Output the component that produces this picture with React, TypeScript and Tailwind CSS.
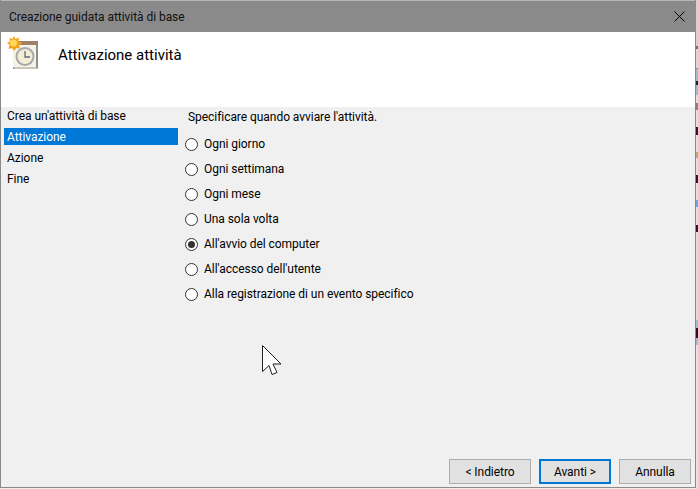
const options = [
  { label: "Ogni giorno" },
  { label: "Ogni settimana" },
  { label: "Ogni mese" },
  { label: "Una sola volta" },
  { label: "All'avvio del computer", checked: true },
  { label: "All'accesso dell'utente" },
  { label: "Alla registrazione di un evento specifico" },
];

const steps = ["Crea un'attività di base", "Attivazione", "Azione", "Fine"];

const strip = [
  "h-[46px] bg-[#d2d2d2]",
  "h-[3px] bg-[#707070]",
  "h-[19px] bg-[#d8d8d8]",
  "h-[1px] bg-[#8c8c8c]",
  "h-[12px] bg-[#a4b8cf]",
  "h-[4px] bg-[#14203c]",
  "h-[10px] bg-[#a4b8cf]",
  "h-[8px] bg-[#e0e0e0]",
  "h-[7px] bg-[#8d7f86]",
  "h-[17px] bg-[#e0e0e0]",
  "h-[8px] bg-[#3a1030]",
  "h-[17px] bg-[#e0e0e0]",
  "h-[6px] bg-[#b8b070]",
  "h-[17px] bg-[#e0e0e0]",
  "h-[8px] bg-[#3a1030]",
  "h-[17px] bg-[#e0e0e0]",
  "h-[7px] bg-[#6aa8dc]",
  "h-[18px] bg-[#e0e0e0]",
  "h-[7px] bg-[#3a1030]",
  "h-[88px] bg-[#dcdcdc]",
  "h-[8px] bg-[#a4b8cf]",
  "h-[10px] bg-[#301028]",
  "h-[7px] bg-[#a4b8cf]",
  "flex-1 bg-[#e4e4e4]",
];

function TaskIcon() {
  return (
    <svg width="32" height="34" viewBox="0 0 32 34" className="block">
      <rect x="6" y="5" width="25" height="28" fill="#8f8f8f" />
      <rect x="6" y="9" width="23" height="22" fill="#f6f2e6" />
      <rect x="8" y="5" width="23" height="4" fill="#a27f68" />
      <path d="M6 31h23l2 2H8z" fill="#c9c5ba" />
      <circle cx="18" cy="20.500" r="9.500" fill="#a8a8a8" />
      <circle cx="18" cy="20.500" r="7.500" fill="#f5eed6" />
      <path d="M18 15v6h5" fill="none" stroke="#5a6a80" strokeWidth="1.300" />
      <path d="M7 0l1.500 3 3.500-1.500-.5 3.500 4 2-3.500 2 1 3.500-3.500-.5-2.500 3-2-3-3.500 1 1-4L0 7l3-1.500-.5-3.500 3 1z" fill="#f2a21a" />
      <circle cx="6.500" cy="7" r="3.500" fill="#ffd75a" />
    </svg>
  );
}

function Radio({ checked }: { checked?: boolean }) {
  return (
    <span className="flex h-[13px] w-[13px] shrink-0 items-center justify-center rounded-full border border-[#333333] bg-white">
      {checked && <span className="h-[7px] w-[7px] rounded-full bg-[#333333]" />}
    </span>
  );
}

export default function App() {
  return (
    <div className="flex h-[489px] w-[698px] overflow-hidden bg-[#f0f0f0] font-['Roboto',sans-serif] text-[12px] leading-[16px] tracking-[-0.05px] text-black">
      <div className="flex h-[488px] w-[696px] shrink-0 flex-col border-x border-b border-[#8a8a8a]">
        <div className="flex h-[32px] shrink-0 items-center justify-between border-t border-[#b8b8b8] bg-[#8a8a8a] pl-[8px] pr-[10px]">
          <span className="text-[#111111]">Creazione guidata attività di base</span>
          <svg width="11" height="11" viewBox="0 0 11 11" className="block">
            <path d="M0.500 0.500l10 10M10.500 0.500l-10 10" stroke="#000" strokeWidth="1" fill="none" />
          </svg>
        </div>
        <div className="flex h-[75px] shrink-0 bg-white">
          <div className="ml-[6px] mt-[4px]"><TaskIcon /></div>
          <div className="ml-[19px] mt-[13px] text-[15px] leading-[20px] tracking-normal">Attivazione attività</div>
        </div>
        <div className="flex min-h-0 flex-1">
          <div className="w-[177px] shrink-0 pl-[3px]">
            {steps.map((s, i) => (
              <div
                key={s}
                className={`mb-[4px] flex h-[17px] items-center pl-[3px] ${i === 1 ? "bg-[#0078d7] text-white" : ""}`}
              >
                {s}
              </div>
            ))}
          </div>
          <div className="flex flex-1 flex-col pl-[7px]">
            <div className="ml-[3px] mt-[2px]">Specificare quando avviare l'attività.</div>
            <div className="mt-[11px] flex flex-col gap-[9px]">
              {options.map((o) => (
                <label key={o.label} className="flex h-[16px] items-center gap-[6px]">
                  <Radio checked={o.checked} />
                  <span>{o.label}</span>
                </label>
              ))}
            </div>
            <div className="relative flex-1">
              <svg width="20" height="31" viewBox="0 0 20 31" className="absolute left-[77px] top-[43px]">
                <path d="M.5 .5v26l6.500-6 3 9 5-2-4-8.500h8z" fill="#fff" stroke="#222" strokeWidth="1" />
              </svg>
            </div>
            <div className="mb-[3px] mr-[4px] flex justify-end gap-[8px]">
              <button className="h-[25px] w-[82px] border border-[#adadad] bg-[#e1e1e1]">&lt; Indietro</button>
              <button className="h-[25px] w-[72px] border-2 border-[#0078d7] bg-[#e1e1e1]">Avanti &gt;</button>
              <button className="h-[25px] w-[72px] border border-[#adadad] bg-[#e1e1e1]">Annulla</button>
            </div>
          </div>
        </div>
      </div>
      <div className="flex h-[489px] flex-1 flex-col">
        {strip.map((c, i) => (
          <div key={i} className={c} />
        ))}
      </div>
    </div>
  );
}
